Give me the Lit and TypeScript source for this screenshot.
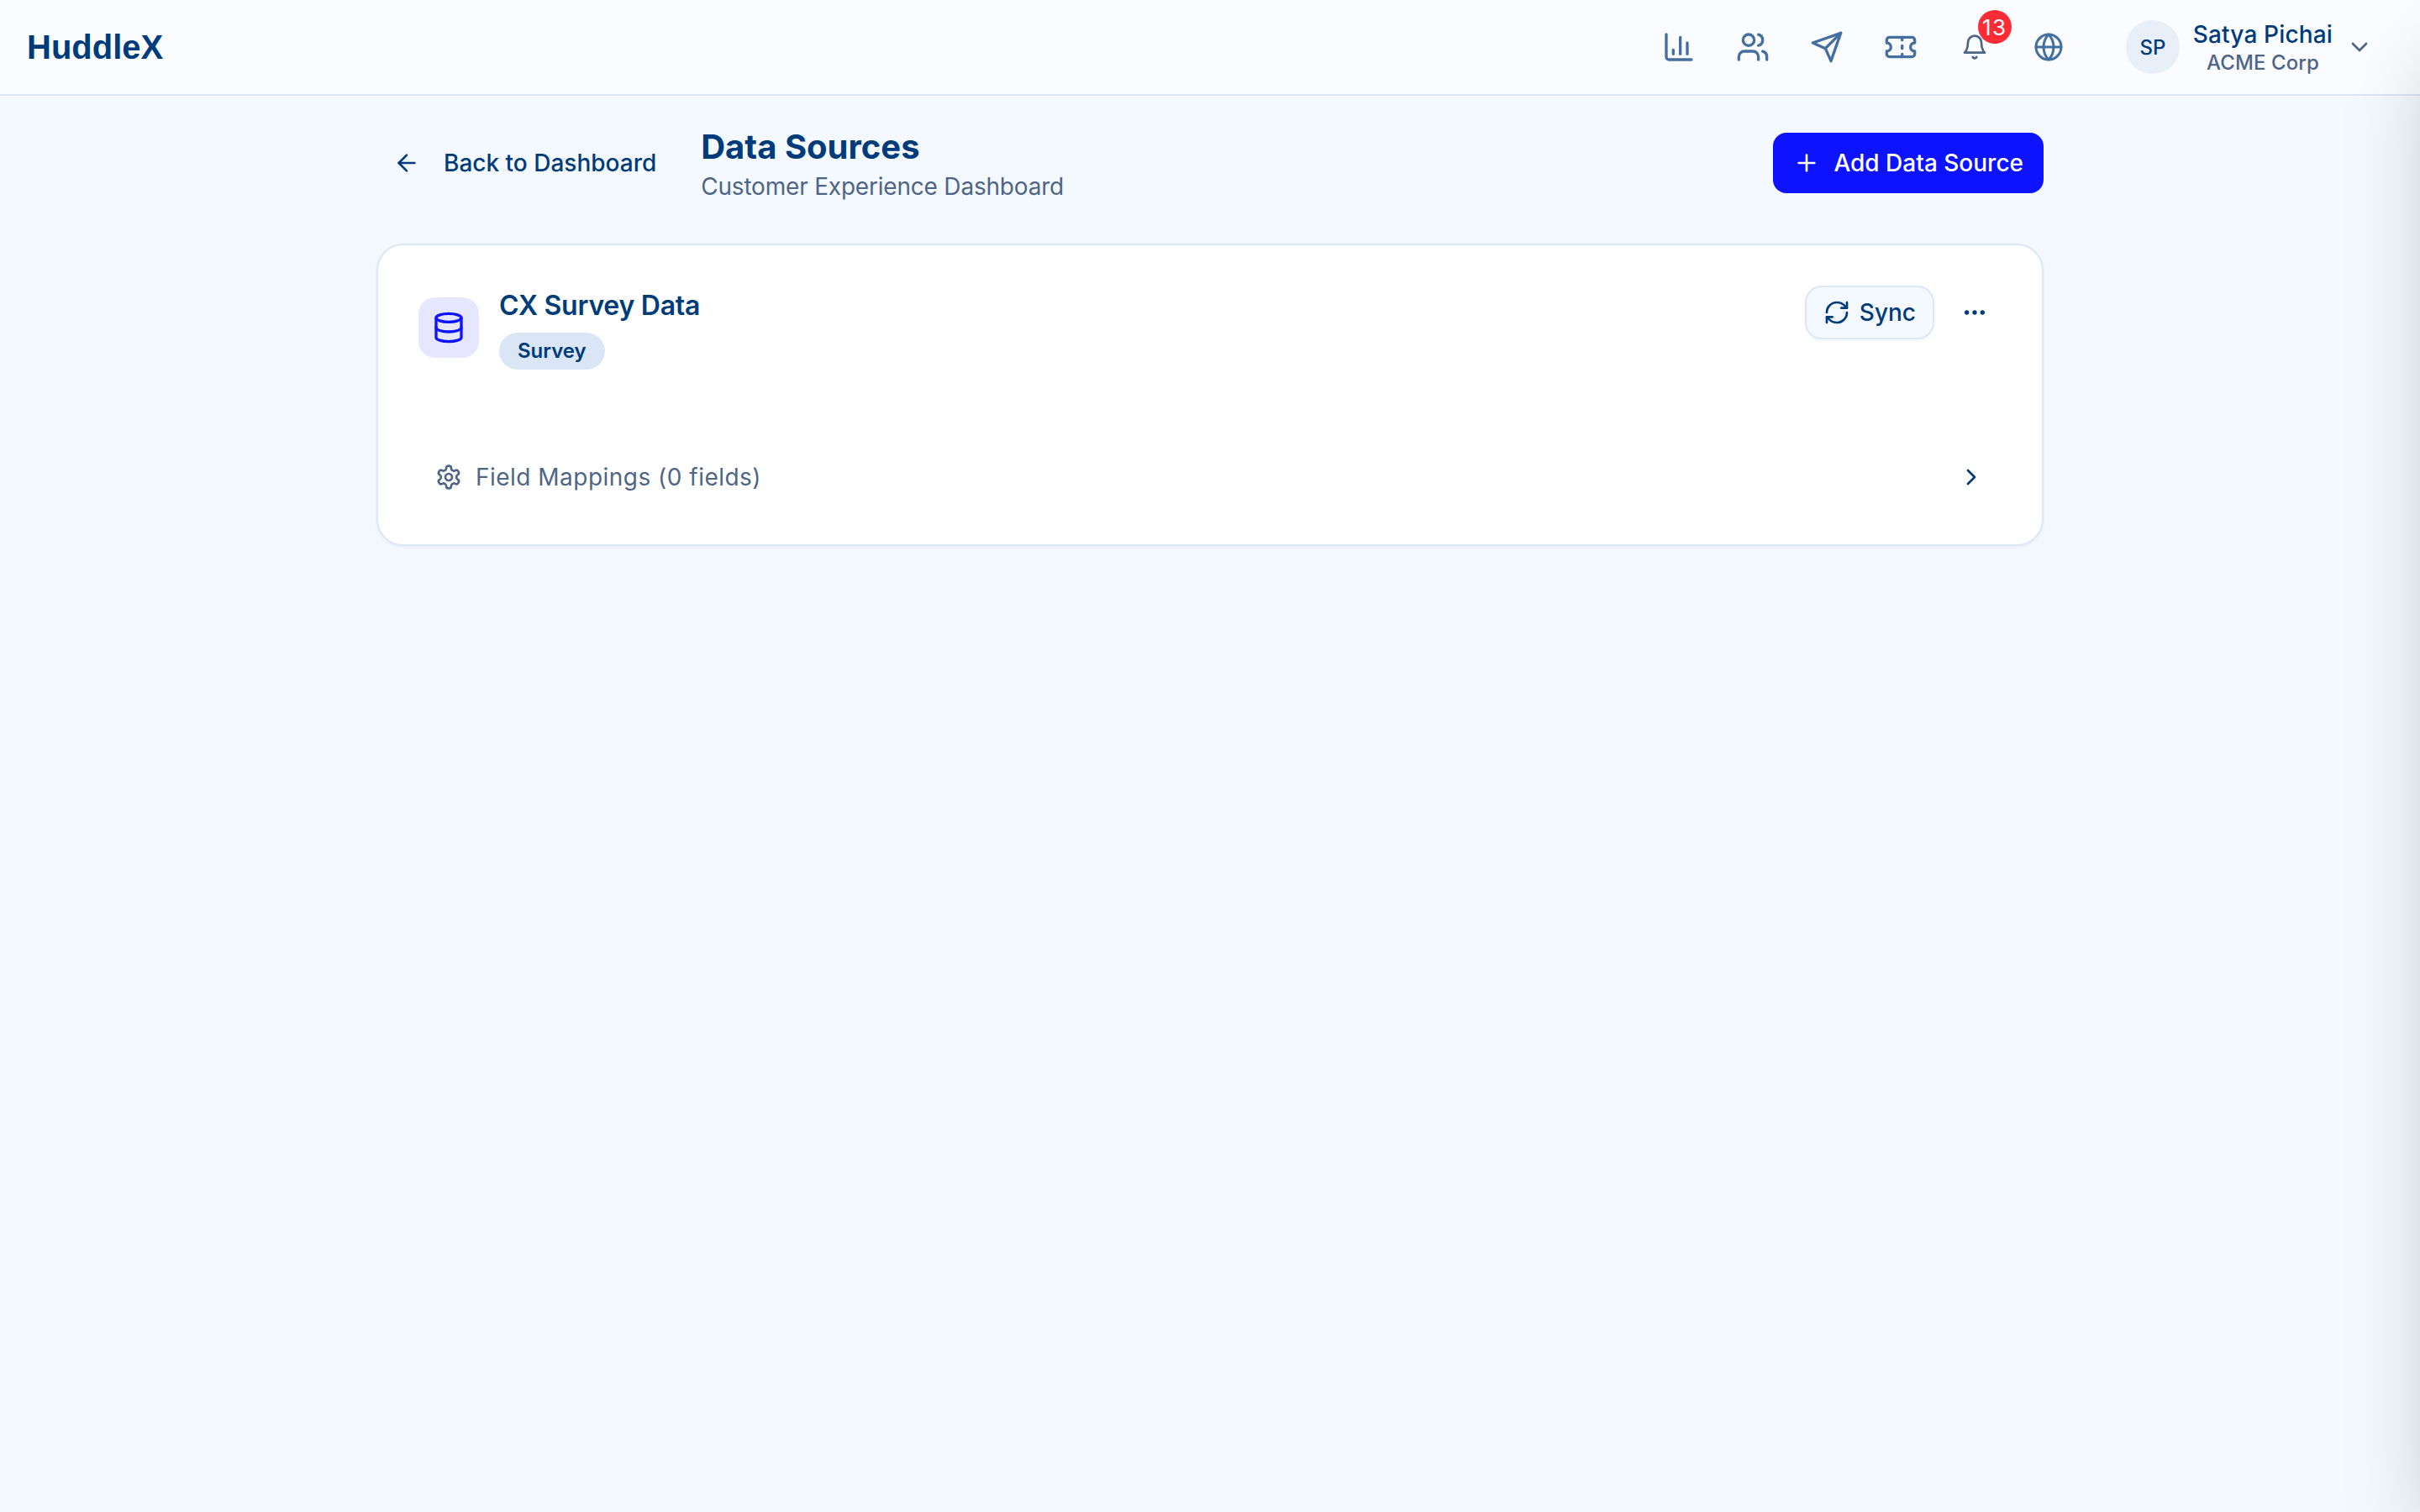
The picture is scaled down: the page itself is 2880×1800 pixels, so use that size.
import { LitElement, html, css } from 'lit';
import { customElement } from 'lit/decorators.js';

const chartIcon = html`<svg class="icon" width="40" height="40" viewBox="0 0 24 24" fill="none" stroke="currentColor" stroke-width="2" stroke-linecap="round" stroke-linejoin="round"><path d="M3 3v16a2 2 0 0 0 2 2h16" /><path d="M18 17V9" /><path d="M13 17V5" /><path d="M8 17v-3" /></svg>`;
const usersIcon = html`<svg class="icon" width="40" height="40" viewBox="0 0 24 24" fill="none" stroke="currentColor" stroke-width="2" stroke-linecap="round" stroke-linejoin="round"><path d="M16 21v-2a4 4 0 0 0-4-4H6a4 4 0 0 0-4 4v2" /><circle cx="9" cy="7" r="4" /><path d="M22 21v-2a4 4 0 0 0-3-3.87" /><path d="M16 3.13a4 4 0 0 1 0 7.75" /></svg>`;
const sendIcon = html`<svg class="icon" width="40" height="40" viewBox="0 0 24 24" fill="none" stroke="currentColor" stroke-width="2" stroke-linecap="round" stroke-linejoin="round"><path d="m22 2-7 20-4-9-9-4Z" /><path d="M22 2 11 13" /></svg>`;
const ticketIcon = html`<svg class="icon" width="40" height="40" viewBox="0 0 24 24" fill="none" stroke="currentColor" stroke-width="2" stroke-linecap="round" stroke-linejoin="round"><path d="M2 9a3 3 0 0 1 0 6v2a2 2 0 0 0 2 2h16a2 2 0 0 0 2-2v-2a3 3 0 0 1 0-6V7a2 2 0 0 0-2-2H4a2 2 0 0 0-2 2Z" /><path d="M13 5v2" /><path d="M13 17v2" /><path d="M13 11v2" /></svg>`;
const bellIcon = html`<svg class="icon" width="32" height="32" viewBox="0 0 24 24" fill="none" stroke="currentColor" stroke-width="2" stroke-linecap="round" stroke-linejoin="round"><path d="M6 8a6 6 0 0 1 12 0c0 7 3 9 3 9H3s3-2 3-9" /><path d="M10.3 21a1.94 1.94 0 0 0 3.4 0" /></svg>`;
const globeIcon = html`<svg class="icon" width="36" height="36" viewBox="0 0 24 24" fill="none" stroke="currentColor" stroke-width="2" stroke-linecap="round" stroke-linejoin="round"><circle cx="12" cy="12" r="10" /><path d="M12 2a14.5 14.5 0 0 0 0 20 14.5 14.5 0 0 0 0-20" /><path d="M2 12h20" /></svg>`;
const chevronDown = html`<svg class="icon" width="32" height="32" viewBox="0 0 24 24" fill="none" stroke="currentColor" stroke-width="2" stroke-linecap="round" stroke-linejoin="round"><path d="m6 9 6 6 6-6" /></svg>`;
const chevronRight = html`<svg class="icon" width="32" height="32" viewBox="0 0 24 24" fill="none" stroke="currentColor" stroke-width="2" stroke-linecap="round" stroke-linejoin="round"><path d="m9 18 6-6-6-6" /></svg>`;
const arrowLeft = html`<svg class="icon" width="32" height="32" viewBox="0 0 24 24" fill="none" stroke="currentColor" stroke-width="2" stroke-linecap="round" stroke-linejoin="round"><path d="m12 19-7-7 7-7" /><path d="M19 12H5" /></svg>`;
const plusIcon = html`<svg class="icon" width="32" height="32" viewBox="0 0 24 24" fill="none" stroke="currentColor" stroke-width="2" stroke-linecap="round" stroke-linejoin="round"><path d="M5 12h14" /><path d="M12 5v14" /></svg>`;
const databaseIcon = html`<svg class="icon" width="40" height="40" viewBox="0 0 24 24" fill="none" stroke="currentColor" stroke-width="2" stroke-linecap="round" stroke-linejoin="round"><ellipse cx="12" cy="5" rx="9" ry="3" /><path d="M3 5V19A9 3 0 0 0 21 19V5" /><path d="M3 12A9 3 0 0 0 21 12" /></svg>`;
const refreshIcon = html`<svg class="icon" width="32" height="32" viewBox="0 0 24 24" fill="none" stroke="currentColor" stroke-width="2" stroke-linecap="round" stroke-linejoin="round"><path d="M3 12a9 9 0 0 1 9-9 9.75 9.75 0 0 1 6.74 2.74L21 8" /><path d="M21 3v5h-5" /><path d="M21 12a9 9 0 0 1-9 9 9.75 9.75 0 0 1-6.74-2.74L3 16" /><path d="M8 16H3v5" /></svg>`;
const dotsIcon = html`<svg class="icon" width="32" height="32" viewBox="0 0 24 24" fill="none" stroke="currentColor" stroke-width="2" stroke-linecap="round" stroke-linejoin="round"><circle cx="12" cy="12" r="1" /><circle cx="19" cy="12" r="1" /><circle cx="5" cy="12" r="1" /></svg>`;
const gearIcon = html`<svg class="icon" width="32" height="32" viewBox="0 0 24 24" fill="none" stroke="currentColor" stroke-width="2" stroke-linecap="round" stroke-linejoin="round"><path d="M12.22 2h-.44a2 2 0 0 0-2 2v.18a2 2 0 0 1-1 1.73l-.43.25a2 2 0 0 1-2 0l-.15-.08a2 2 0 0 0-2.73.73l-.22.38a2 2 0 0 0 .73 2.73l.15.1a2 2 0 0 1 1 1.72v.51a2 2 0 0 1-1 1.74l-.15.09a2 2 0 0 0-.73 2.73l.22.38a2 2 0 0 0 2.73.73l.15-.08a2 2 0 0 1 2 0l.43.25a2 2 0 0 1 1 1.73V20a2 2 0 0 0 2 2h.44a2 2 0 0 0 2-2v-.18a2 2 0 0 1 1-1.73l.43-.25a2 2 0 0 1 2 0l.15.08a2 2 0 0 0 2.73-.73l.22-.39a2 2 0 0 0-.73-2.73l-.15-.08a2 2 0 0 1-1-1.74v-.5a2 2 0 0 1 1-1.74l.15-.09a2 2 0 0 0 .73-2.73l-.22-.38a2 2 0 0 0-2.73-.73l-.15.08a2 2 0 0 1-2 0l-.43-.25a2 2 0 0 1-1-1.73V4a2 2 0 0 0-2-2z" /><circle cx="12" cy="12" r="3" /></svg>`;

@customElement('app-root')
export class AppRoot extends LitElement {
  static styles = css`
    :host {
      display: block;
      min-height: 100vh;
      background: #f4f8ff;
      color: #003b7a;
      font-family: Inter, 'Liberation Sans', sans-serif;
      overflow: hidden;
    }

    .icon {
      display: block;
      flex: none;
    }

    button {
      font: inherit;
      color: inherit;
      background: none;
      border: none;
      padding: 0;
    }

    /* top bar */
    .topbar {
      display: flex;
      align-items: center;
      justify-content: space-between;
      height: 112px;
      padding: 0 32px;
      background: #fafcff;
      border-bottom: 2px solid #dbe6f6;
    }

    .logo {
      font-family: 'Liberation Sans', Arial, sans-serif;
      font-size: 40px;
      font-weight: 700;
      color: #003b7a;
    }

    .topbar-right {
      display: flex;
      align-items: center;
      gap: 32px;
    }

    .nav {
      display: flex;
      gap: 16px;
    }

    .nav-btn {
      position: relative;
      display: flex;
      align-items: center;
      justify-content: center;
      width: 72px;
      height: 72px;
      color: #456f9f;
    }

    .nav-btn.bell {
      color: #4f6585;
    }

    .badge {
      position: absolute;
      top: -8px;
      right: -8px;
      display: flex;
      align-items: center;
      justify-content: center;
      width: 40px;
      height: 40px;
      border-radius: 50%;
      background: #fb2c36;
      color: #fff;
      font-size: 26px;
      letter-spacing: 1.5px;
    }

    .user {
      display: flex;
      align-items: center;
      gap: 16px;
      padding: 0 24px;
    }

    .avatar {
      display: flex;
      align-items: center;
      justify-content: center;
      width: 64px;
      height: 64px;
      border-radius: 50%;
      background: #e8eff9;
      font-size: 24px;
      font-weight: 500;
    }

    .user-text {
      display: flex;
      flex-direction: column;
      align-items: center;
      padding-top: 2px;
    }

    .user-name {
      font-size: 28px;
      line-height: 36px;
      font-weight: 500;
      letter-spacing: 0.15px;
    }

    .user-org {
      font-size: 24px;
      line-height: 32px;
      font-weight: 500;
      letter-spacing: 0.1px;
      color: #4f6585;
    }

    .user-chevron {
      color: #4f6585;
    }

    /* page */
    .main {
      width: 1984px;
      margin: 0 auto;
      padding-top: 32px;
    }

    .page-head {
      display: flex;
      align-items: center;
      margin-bottom: 48px;
    }

    .back {
      display: flex;
      align-items: center;
      gap: 28px;
      padding: 0 0 0 20px;
      font-size: 28px;
      font-weight: 500;
      margin-right: 53px;
    }

    .titles {
      flex: 1;
    }

    .title {
      font-size: 40px;
      line-height: 56px;
      font-weight: 700;
      padding-top: 1px;
      margin-bottom: -1px;
    }

    .subtitle {
      font-size: 28px;
      line-height: 40px;
      letter-spacing: -0.2px;
      color: #4f6585;
    }

    .add {
      display: flex;
      align-items: center;
      gap: 16px;
      height: 72px;
      padding: 0 24px;
      border-radius: 16px;
      background: #0d12ff;
      color: #fff;
      font-size: 28px;
      font-weight: 500;
    }

    /* source card */
    .card {
      padding: 48px 48px 50px;
      background: #fff;
      border: 2px solid #dce7f7;
      border-radius: 32px;
      box-shadow: 0 2px 4px rgba(0, 59, 122, 0.05);
    }

    .card-head {
      display: flex;
      align-items: flex-start;
      justify-content: space-between;
    }

    .source {
      display: flex;
      align-items: center;
      gap: 24px;
    }

    .tile {
      display: flex;
      align-items: center;
      justify-content: center;
      width: 72px;
      height: 72px;
      border-radius: 20px;
      background: #e6e6ff;
      color: #0d12ff;
    }

    .source-name {
      font-size: 32px;
      line-height: 48px;
      font-weight: 600;
      letter-spacing: -0.25px;
      margin-bottom: 8px;
    }

    .tag {
      display: inline-flex;
      align-items: center;
      height: 42px;
      padding: 0 22px 2px;
      border-radius: 22px;
      background: #dae6f6;
      font-size: 24px;
      font-weight: 600;
    }

    .actions {
      display: flex;
      align-items: center;
      gap: 16px;
    }

    .sync {
      display: flex;
      align-items: center;
      gap: 11px;
      height: 64px;
      padding: 0 20px;
      background: #f4f8ff;
      border: 2px solid #dce7f7;
      border-radius: 20px;
      font-size: 28px;
      font-weight: 500;
      box-shadow: 0 2px 4px rgba(0, 59, 122, 0.05);
    }

    .more {
      display: flex;
      align-items: center;
      justify-content: center;
      width: 64px;
      height: 64px;
    }

    .mappings {
      display: flex;
      align-items: center;
      justify-content: space-between;
      height: 60px;
      margin-top: 98px;
      padding: 0 20px;
    }

    .mappings-label {
      display: flex;
      align-items: center;
      gap: 16px;
      font-size: 28px;
      letter-spacing: 0.48px;
      color: #4f6585;
    }

    /* closed drawer off the right edge, only its shadow shows */
    .drawer {
      position: fixed;
      top: 0;
      bottom: 0;
      left: 100%;
      width: 800px;
      box-shadow: 0 50px 100px -24px rgba(0, 0, 0, 0.25);
    }
  `;

  render() {
    return html`
      <header class="topbar">
        <div class="logo">HuddleX</div>
        <div class="topbar-right">
          <nav class="nav">
            <button class="nav-btn">${chartIcon}</button>
            <button class="nav-btn">${usersIcon}</button>
            <button class="nav-btn">${sendIcon}</button>
            <button class="nav-btn">${ticketIcon}</button>
            <button class="nav-btn bell">${bellIcon}<span class="badge">13</span></button>
            <button class="nav-btn">${globeIcon}</button>
          </nav>
          <button class="user">
            <span class="avatar">SP</span>
            <span class="user-text">
              <span class="user-name">Satya Pichai</span>
              <span class="user-org">ACME Corp</span>
            </span>
            <span class="user-chevron">${chevronDown}</span>
          </button>
        </div>
      </header>

      <main class="main">
        <div class="page-head">
          <button class="back">${arrowLeft}<span>Back to Dashboard</span></button>
          <div class="titles">
            <div class="title">Data Sources</div>
            <div class="subtitle">Customer Experience Dashboard</div>
          </div>
          <button class="add">${plusIcon}<span>Add Data Source</span></button>
        </div>

        <section class="card">
          <div class="card-head">
            <div class="source">
              <div class="tile">${databaseIcon}</div>
              <div>
                <div class="source-name">CX Survey Data</div>
                <span class="tag">Survey</span>
              </div>
            </div>
            <div class="actions">
              <button class="sync">${refreshIcon}<span>Sync</span></button>
              <button class="more">${dotsIcon}</button>
            </div>
          </div>
          <div class="mappings">
            <div class="mappings-label">${gearIcon}<span>Field Mappings (0 fields)</span></div>
            ${chevronRight}
          </div>
        </section>
      </main>

      <div class="drawer"></div>
    `;
  }
}
